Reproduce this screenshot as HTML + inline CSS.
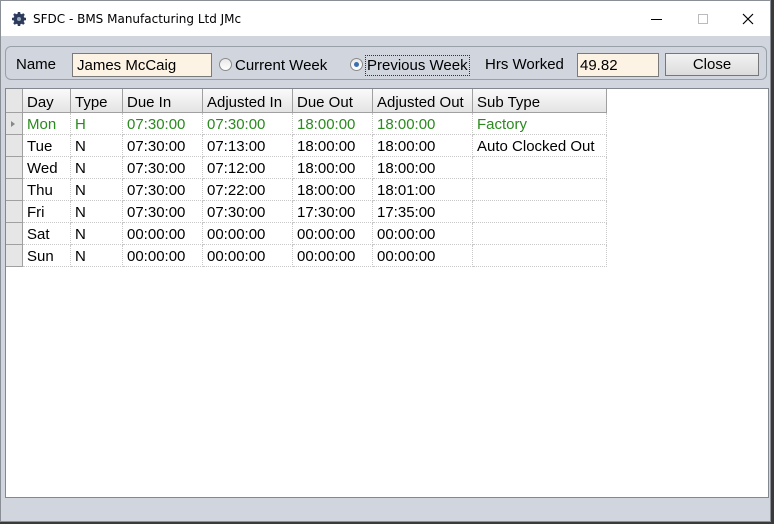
<!DOCTYPE html>
<html><head><style>
*{margin:0;padding:0;box-sizing:border-box}
body{width:774px;height:524px;background:#3a3a3a;position:relative;overflow:hidden;font-family:"Liberation Sans",sans-serif;font-size:15px;color:#000}
.win{position:absolute;left:0;top:0;width:771px;height:522px;background:#d1d6de;border:1px solid #8a8f96}
.title{position:absolute;left:0;top:0;width:769px;height:35px;background:#fff}
.title span{position:absolute;left:32px;top:11px;font-size:12px;font-family:"DejaVu Sans","Liberation Sans",sans-serif}
.ab{position:absolute}
.grp{position:absolute;left:4px;top:45px;width:762px;height:34px;border:1px solid #9aa0a8;border-radius:6px}
.tb{position:absolute;height:24px;background:#fdf3e4;border:1px solid #7a7a7a;padding:3px 4px;font-size:15px}
.radio{position:absolute;width:13px;height:13px;border-radius:50%;border:1px solid #8a8a8a;background:linear-gradient(#e8e8e8,#fff)}
.btn{position:absolute;left:664px;top:52px;width:94px;height:23px;border:1px solid #777;background:linear-gradient(#f2f2f2,#dcdcdc);text-align:center;line-height:21px}
.grid{position:absolute;left:4px;top:87px;width:764px;height:410px;background:#fff;border:1px solid #828790}
.c{position:absolute;height:22px;line-height:23px;padding-left:4px;white-space:nowrap}
.hd{background:linear-gradient(#fafafa,#e4e4e4);border-right:1px solid #a0a0a0;border-bottom:1px solid #a0a0a0;height:24px;line-height:27px}
.cell{border-right:1px dotted #c8c8c8;border-bottom:1px dotted #c8c8c8}
.rh{background:#e6e6e6;border-right:1px solid #a0a0a0;border-bottom:1px solid #a0a0a0;padding:0}
.g{color:#2a8a1e}
</style></head><body>
<div class="win">
<div class="title">
<svg class="ab" style="left:10px;top:10px" width="16" height="16" viewBox="0 0 16 16"><circle cx="8" cy="8" r="5.5" fill="#2d3a5c"/><g stroke="#2d3a5c" stroke-width="2.5"><line x1="8" y1="1" x2="8" y2="15"/><line x1="1" y1="8" x2="15" y2="8"/><line x1="3" y1="3" x2="13" y2="13"/><line x1="13" y1="3" x2="3" y2="13"/></g><circle cx="8" cy="8" r="2" fill="#9ab"/></svg>
<span>SFDC - BMS Manufacturing Ltd JMc</span>
<div class="ab" style="left:650px;top:18px;width:11px;height:1px;background:#000"></div>
<div class="ab" style="left:697px;top:13px;width:10px;height:10px;border:1px solid #bbb"></div>
<svg class="ab" style="left:741px;top:12px" width="12" height="12"><path d="M1 1L11 11M11 1L1 11" stroke="#000" stroke-width="1.2"/></svg>
</div>
<div class="grp"></div>
<div class="ab" style="left:15px;top:55px">Name</div>
<div class="tb" style="left:71px;top:52px;width:140px">James McCaig</div>
<div class="radio" style="left:218px;top:57px"></div>
<div class="ab" style="left:234px;top:56px">Current Week</div>
<div class="radio" style="left:349px;top:57px"><div style="position:absolute;left:3px;top:3px;width:5px;height:5px;border-radius:50%;background:#3b6fb0"></div></div>
<div class="ab" style="left:364px;top:54px;border:1px dotted #333;padding:1px 1px;line-height:17px">Previous Week</div>
<div class="ab" style="left:484px;top:55px">Hrs Worked</div>
<div class="tb" style="left:576px;top:52px;width:82px;padding-left:2px">49.82</div>
<div class="btn">Close</div>
<div class="grid">
<div class="c hd rh" style="left:0;top:0;width:17px"></div>
<div class="c hd" style="left:17px;top:0;width:48px">Day</div>
<div class="c hd" style="left:65px;top:0;width:52px">Type</div>
<div class="c hd" style="left:117px;top:0;width:80px">Due In</div>
<div class="c hd" style="left:197px;top:0;width:90px">Adjusted In</div>
<div class="c hd" style="left:287px;top:0;width:80px">Due Out</div>
<div class="c hd" style="left:367px;top:0;width:100px">Adjusted Out</div>
<div class="c hd" style="left:467px;top:0;width:134px">Sub Type</div>
</div>
</div>
<script>
var rows=[["Mon","H","07:30:00","07:30:00","18:00:00","18:00:00","Factory"],["Tue","N","07:30:00","07:13:00","18:00:00","18:00:00","Auto Clocked Out"],["Wed","N","07:30:00","07:12:00","18:00:00","18:00:00",""],["Thu","N","07:30:00","07:22:00","18:00:00","18:01:00",""],["Fri","N","07:30:00","07:30:00","17:30:00","17:35:00",""],["Sat","N","00:00:00","00:00:00","00:00:00","00:00:00",""],["Sun","N","00:00:00","00:00:00","00:00:00","00:00:00",""]];
var L=[17,65,117,197,287,367,467],W=[48,52,80,90,80,100,134],h="",g=document.querySelector('.grid');
rows.forEach(function(r,i){var t=24+i*22;h+='<div class="c rh" style="left:0;top:'+t+'px;width:17px">'+(i==0?'<svg width="16" height="22"><path d="M5 8L9 11L5 14Z" fill="#888"/></svg>':'')+'</div>';
r.forEach(function(v,j){h+='<div class="c cell'+(i==0?' g':'')+'" style="left:'+L[j]+'px;top:'+t+'px;width:'+W[j]+'px">'+v+'</div>';});});
g.insertAdjacentHTML('beforeend',h);
</script>
</body></html>
